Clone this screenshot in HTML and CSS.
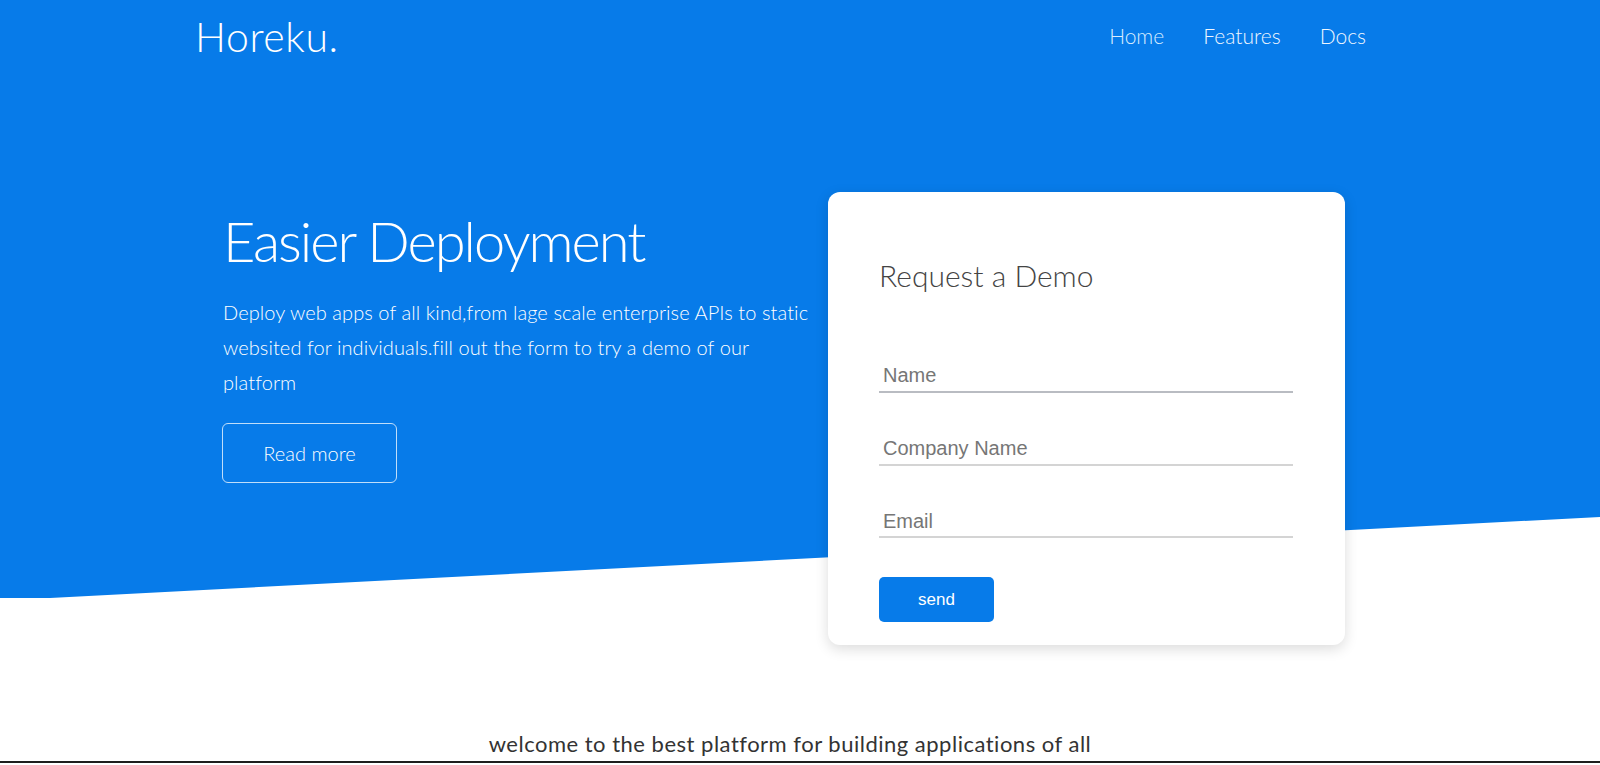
FILE: index.html
```html
<!DOCTYPE html>
<html lang="en">
<head>
<meta charset="utf-8">
<title>Horeku.</title>
<link rel="stylesheet" href="styles.css">
</head>
<body>
<div class="top">
  <header class="header">
    <div class="logo">Horeku.</div>
    <nav class="nav">
      <a class="nav-link nav-home" href="#">Home</a>
      <a class="nav-link" href="#">Features</a>
      <a class="nav-link" href="#">Docs</a>
    </nav>
  </header>
  <section class="hero">
    <div class="hero-text">
      <h1 class="hero-title">Easier Deployment</h1>
      <p class="hero-lead">Deploy web apps of all kind,from lage scale enterprise APIs to static websited for individuals.fill out the form to try a demo of our platform</p>
      <a class="btn-outline" href="#">Read more</a>
    </div>
    <form class="card">
      <h2 class="card-title">Request a Demo</h2>
      <input class="field field-first" type="text" placeholder="Name">
      <input class="field" type="text" placeholder="Company Name">
      <input class="field" type="email" placeholder="Email">
      <button class="btn-send" type="button">send</button>
    </form>
  </section>
</div>
<section class="welcome">
  <p class="welcome-text">welcome to the best platform for building applications of all</p>
</section>
<div class="rule"></div>
</body>
</html>
```

FILE: styles.css
```css
* { box-sizing: border-box; }
html, body { margin: 0; padding: 0; }
body {
  font-family: "Lato", "Open Sans", sans-serif;
  background: #ffffff;
  overflow: hidden;
  height: 765px;
}
.top {
  position: relative;
  isolation: isolate;
}
.top::before {
  content: "";
  position: absolute;
  left: 0;
  top: 0;
  width: 100%;
  height: 598px;
  background: #077be9;
  clip-path: polygon(0 0, 100% 0, 100% 517px, 50px 598px, 0 598px);
  z-index: -1;
}
.header {
  display: flex;
  justify-content: space-between;
  align-items: flex-start;
  padding: 13px 234px 0 195px;
}
.logo {
  font-size: 41px;
  line-height: 48px;
  font-weight: 300;
  letter-spacing: 0.6px;
  color: #ffffff;
}
.nav {
  display: flex;
  gap: 39px;
  margin-top: 10px;
}
.nav-link {
  font-size: 21px;
  line-height: 25px;
  font-weight: 300;
  color: #eef6ff;
  text-decoration: none;
}
.nav-home { color: #d9ecff; }
.hero {
  display: flex;
  align-items: flex-start;
  padding-left: 223px;
  margin-top: 131px;
}
.hero-text {
  width: 605px;
  padding-top: 15px;
  color: #ffffff;
}
.hero-title {
  margin: 0;
  font-size: 56px;
  line-height: 67px;
  font-weight: 300;
  letter-spacing: -2px;
}
.hero-lead {
  width: 592px;
  margin: 21px 0 0;
  font-size: 20px;
  line-height: 35px;
  font-weight: 300;
  letter-spacing: 0.08px;
}
.btn-outline {
  display: flex;
  align-items: center;
  justify-content: center;
  width: 175px;
  height: 60px;
  margin-top: 23px;
  margin-left: -1px;
  border: 1px solid rgba(255, 255, 255, 0.75);
  border-radius: 6px;
  color: #ffffff;
  font-size: 20px;
  font-weight: 300;
  text-decoration: none;
}
.card {
  width: 517px;
  height: 453px;
  background: #ffffff;
  border-radius: 12px;
  box-shadow: 0 4px 14px rgba(0, 0, 0, 0.14);
  padding: 65px 52px 23px 51px;
  display: flex;
  flex-direction: column;
  align-items: flex-start;
}
.card-title {
  margin: 0 0 65px;
  font-size: 30px;
  line-height: 37px;
  font-weight: 300;
  color: #444444;
}
.field {
  display: block;
  width: 100%;
  height: 34px;
  padding: 2px 4px 0;
  border: none;
  border-bottom: 2px solid #d4d4d4;
  font-family: "Liberation Sans", Arial, sans-serif;
  font-size: 20px;
  color: #333;
  background: transparent;
  outline: none;
  margin-bottom: 39px;
}
.field-first { border-bottom-color: #b9bcc2; }
.field::placeholder { color: #767676; }
.btn-send {
  margin-top: 0;
  width: 115px;
  height: 45px;
  border: none;
  border-radius: 5px;
  background: #077be9;
  color: #ffffff;
  font-family: "Liberation Sans", Arial, sans-serif;
  font-size: 17px;
  cursor: pointer;
}
.welcome {
  padding: 0 20px 0 0;
  margin-top: 86px;
  text-align: center;
}
.welcome-text {
  margin: 0;
  font-size: 22px;
  line-height: 26px;
  font-weight: 400;
  letter-spacing: 0.5px;
  color: #333333;
}
.rule {
  margin-top: 4px;
  height: 2px;
  background: #1e1e1e;
}
```
